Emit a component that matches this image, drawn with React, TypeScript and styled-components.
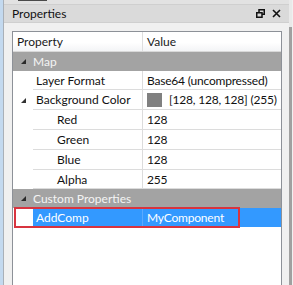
import React from "react";
import styled, { createGlobalStyle } from "styled-components";

const Global = createGlobalStyle`
  html, body { margin: 0; padding: 0; background: #f0f0f0; }
  body { font-family: Lato, "Noto Sans", sans-serif; }
`;

const Page = styled.div`
  width: 293px;
  height: 285px;
  display: flex;
  overflow: hidden;
  background: #f0f0f0;
  white-space: nowrap;
`;

const BlueStrip = styled.div`
  width: 3px;
  background: #c3d9ef;
`;

const Dock = styled.div`
  width: 285px;
  border-left: 1px solid #a9b0b8;
  display: flex;
  flex-direction: column;
`;

const TopStrip = styled.div`
  height: 4px;
  background: #e2e2e2;
  display: flex;
  align-items: flex-start;
`;

const TabEdge = styled.div`
  margin-left: 14px;
  width: 29px;
  height: 1px;
  background: #4a4a4a;
`;

const TitleBar = styled.div`
  height: 19px;
  box-sizing: border-box;
  background: #dadada;
  border-top: 1px solid #cfcfcf;
  border-bottom: 1px solid #cfcfcf;
  display: flex;
  align-items: center;
  padding: 0 8px 0 8px;
  font-size: 12px;
  color: #111;
`;

const Title = styled.span`
  flex: 1;
`;

const TitleIcons = styled.div`
  display: flex;
  gap: 7px;
  align-items: center;
`;

const Body = styled.div`
  flex: 1;
  display: flex;
  padding: 8px 0 0 8px;
`;

const Grid = styled.div`
  width: 270px;
  box-sizing: border-box;
  border: 1px solid #8d9198;
  border-bottom: none;
  background: #fff;
  display: flex;
  flex-direction: column;
`;

const RightEdge = styled.div`
  width: 3px;
  padding-top: 27px;
  background: #e9e9e9;
  display: flex;
`;

const RightBar = styled.div`
  flex: 1;
  background: #a0a0a0;
`;

const Header = styled.div`
  height: 20px;
  box-sizing: border-box;
  display: grid;
  grid-template-columns: 130px 1fr;
  background: linear-gradient(#ffffff, #ffffff 55%, #f3f4f6);
  border-bottom: 1px solid #d8d8d8;
  font-size: 12px;
  color: #1a1a1a;
`;

const HeaderCell = styled.div<{ $first?: boolean }>`
  display: flex;
  align-items: center;
  padding-left: 4px;
  border-right: ${(p) => (p.$first ? "1px solid #dedede" : "none")};
`;

const GroupRow = styled.div<{ $h: number }>`
  height: ${(p) => p.$h}px;
  display: flex;
  align-items: center;
  background: #a3a3a3;
  color: #f4f4f4;
  font-size: 12px;
`;

const Expander = styled.div`
  width: 20px;
  display: flex;
  justify-content: center;
  align-items: center;
`;

const ItemRow = styled.div<{ $h: number }>`
  height: ${(p) => p.$h}px;
  display: grid;
  grid-template-columns: 20px 110px 1fr;
  font-size: 12px;
  color: #111;
  position: relative;
`;

const Margin = styled.div`
  display: flex;
  align-items: center;
  justify-content: center;
  background: #fff;
`;

const NameCell = styled.div<{ $indent?: number; $sel?: boolean }>`
  display: flex;
  align-items: center;
  box-sizing: border-box;
  padding-left: ${(p) => 3 + (p.$indent ?? 0)}px;
  border-right: 1px solid ${(p) => (p.$sel ? "#5aa9ff" : "#dcdcdc")};
  border-bottom: 1px solid ${(p) => (p.$sel ? "#3399ff" : "#dcdcdc")};
  background: ${(p) => (p.$sel ? "#3399ff" : "#fff")};
  color: ${(p) => (p.$sel ? "#fff" : "#111")};
  overflow: hidden;
`;

const ValueCell = styled.div<{ $sel?: boolean }>`
  display: flex;
  align-items: center;
  gap: 7px;
  box-sizing: border-box;
  padding-left: 4px;
  letter-spacing: -0.2px;
  border-bottom: 1px solid ${(p) => (p.$sel ? "#3399ff" : "#dcdcdc")};
  background: ${(p) => (p.$sel ? "#3399ff" : "#fff")};
  color: ${(p) => (p.$sel ? "#fff" : "#111")};
  overflow: hidden;
`;

const Swatch = styled.div`
  flex: none;
  width: 15px;
  height: 14px;
  background: #808080;
`;

const Highlight = styled.div`
  position: absolute;
  left: 1px;
  top: -1px;
  width: 226px;
  height: 21px;
  box-sizing: border-box;
  border: 2px solid #d8343f;
  pointer-events: none;
`;

const Arrow = ({ color = "#333" }: { color?: string }) => (
  <svg width="5" height="5" viewBox="0 0 5 5">
    <polygon points="5,0 5,5 0,5" fill={color} />
  </svg>
);

const RestoreIcon = () => (
  <svg width="9" height="9" viewBox="0 0 9 9">
    <rect x="3" y="0.75" width="5.25" height="4.5" fill="none" stroke="#111" strokeWidth="1.5" />
    <rect x="0.75" y="3.75" width="5.25" height="4.5" fill="#dadada" stroke="#111" strokeWidth="1.5" />
  </svg>
);

const CloseIcon = () => (
  <svg width="9" height="9" viewBox="0 0 9 9">
    <path d="M1 1 L8 8 M8 1 L1 8" stroke="#111" strokeWidth="1.6" />
  </svg>
);

type Item = { name: string; value: string; indent?: number; expand?: boolean; swatch?: boolean; h: number };

const mapItems: Item[] = [
  { name: "Layer Format", value: "Base64 (uncompressed)", h: 19 },
  { name: "Background Color", value: "[128, 128, 128] (255)", expand: true, swatch: true, h: 20 },
  { name: "Red", value: "128", indent: 21, h: 20 },
  { name: "Green", value: "128", indent: 21, h: 20 },
  { name: "Blue", value: "128", indent: 21, h: 20 },
  { name: "Alpha", value: "255", indent: 21, h: 19 },
];

export default function App() {
  return (
    <>
      <Global />
      <Page>
        <BlueStrip />
        <Dock>
          <TopStrip>
            <TabEdge />
          </TopStrip>
          <TitleBar>
            <Title>Properties</Title>
            <TitleIcons>
              <RestoreIcon />
              <CloseIcon />
            </TitleIcons>
          </TitleBar>
          <Body>
            <Grid>
              <Header>
                <HeaderCell $first>Property</HeaderCell>
                <HeaderCell>Value</HeaderCell>
              </Header>
              <GroupRow $h={19}>
                <Expander>
                  <Arrow color="#2a2a2a" />
                </Expander>
                Map
              </GroupRow>
              {mapItems.map((it) => (
                <ItemRow key={it.name} $h={it.h}>
                  <Margin>{it.expand && <Arrow />}</Margin>
                  <NameCell $indent={it.indent}>{it.name}</NameCell>
                  <ValueCell>
                    {it.swatch && <Swatch />}
                    {it.value}
                  </ValueCell>
                </ItemRow>
              ))}
              <GroupRow $h={19}>
                <Expander>
                  <Arrow color="#2a2a2a" />
                </Expander>
                Custom Properties
              </GroupRow>
              <ItemRow $h={19}>
                <Margin />
                <NameCell $sel>AddComp</NameCell>
                <ValueCell $sel>MyComponent</ValueCell>
                <Highlight />
              </ItemRow>
            </Grid>
          </Body>
        </Dock>
        <RightEdge>
          <RightBar />
        </RightEdge>
      </Page>
    </>
  );
}
